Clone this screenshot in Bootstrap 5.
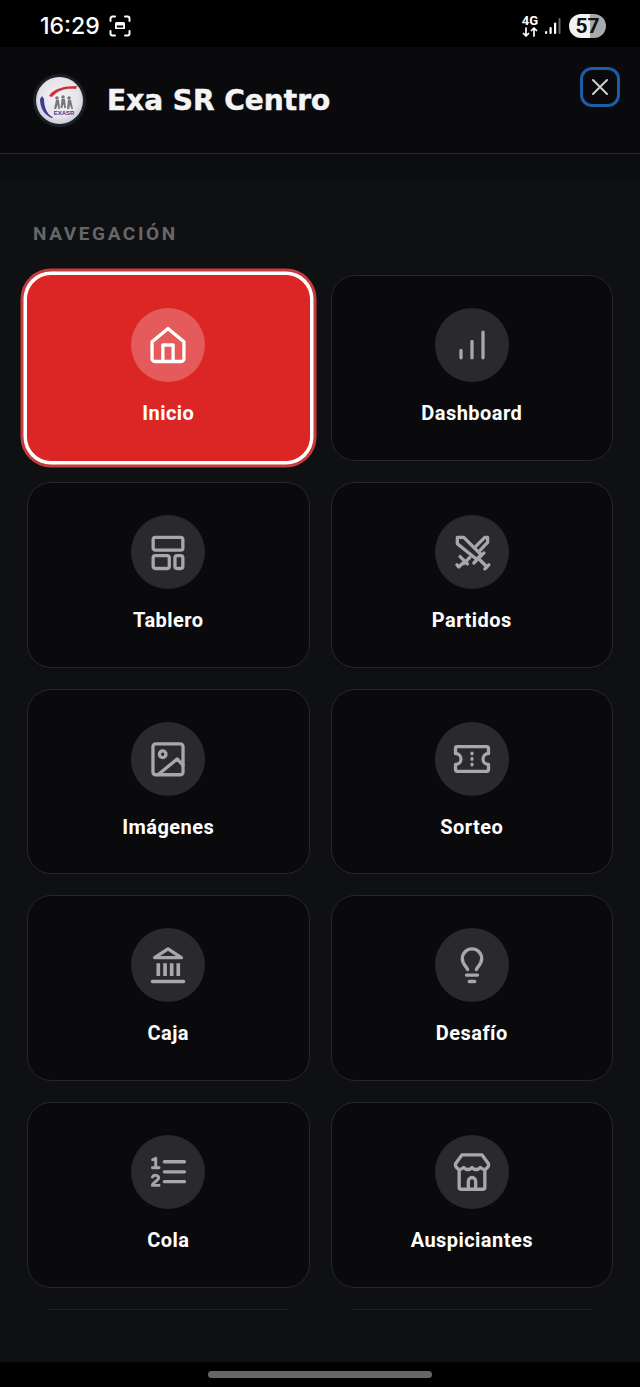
<!DOCTYPE html>
<html lang="es">
<head>
    <meta charset="UTF-8">
    <meta name="viewport" content="width=device-width, initial-scale=1.0">
    <title>Exa SR Centro</title>
    <link rel="stylesheet" href="https://cdn.jsdelivr.net/npm/bootstrap@5.3.0/dist/css/bootstrap.min.css">
    <style>
        html, body { height: 100%; background: #000; }
        body { font-family: Roboto, "Liberation Sans", sans-serif; overflow: hidden; }
        .phone { width: 640px; height: 1387px; background: #0f1012; }

        /* status bar */
        .status-top { height: 47px; background: #000; color: #fff; padding: 5px 34px 0 40px; }
        .clock { font-family: Inter, Roboto, sans-serif; font-size: 23px; font-weight: 500; line-height: 1; margin-right: 9px; }
        .net-type { font-size: 13px; font-weight: 700; line-height: 12px; margin-right: 7px; }
        .battery-pill { width: 37px; height: 24px; border-radius: 12px; color: #111; font-size: 21px; font-weight: 700; line-height: 24px;
            background: linear-gradient(90deg, #f2f2f2 0 57%, #a9a9a9 57% 100%); margin-left: 8px; }

        /* drawer header */
        .drawer-head { height: 107px; background: #0a0a0c; border-bottom: 1px solid #2b2b2d; padding: 20px 20px 0 33px; }
        .brand-logo { width: 53px; height: 53px; margin-top: 7px; margin-right: 21px; }
        .brand-name { font-family: "DejaVu Sans", sans-serif; font-size: 28px; font-weight: 700; color: #f4f4f5; -webkit-text-stroke: .5px #f4f4f5; line-height: 1; margin: 20px 0 0; }
        .close-box { width: 40px; height: 40px; background: transparent; border: 3.5px solid #1c5ca6; border-radius: 12px; padding: 0; }
        .head-strip { height: 27px; background: #0c0d0f; }

        /* navigation */
        .nav-area { height: 1181px; padding: 40px 27px 0 27px; overflow: hidden; }
        .section-label { font-size: 19px; font-weight: 700; letter-spacing: 2.6px; color: #66676b; line-height: 26px; margin: 0 0 28px 6px; }
        .tile-grid { display: grid; grid-template-columns: 1fr 1fr; gap: 21px; }
        .menu-tile { height: 185.75px; padding-top: 32px; background: #0a0a0c; border: 1px solid #26272a; border-radius: 24px; color: #fff; }
        .menu-tile.is-active { background: #dc2626; border-color: #dc2626; box-shadow: 0 0 0 3.5px #fff, 0 0 0 6.5px #c53a3a; }
        .tile-icon { width: 74px; height: 74px; background: #2a2a2c; color: #a8a8aa; margin-bottom: 18px; }
        .is-active .tile-icon { background: #e55b5b; color: #fff; }
        .tile-icon svg { width: 44px; height: 44px; fill: none; stroke: currentColor; stroke-width: 1.8; stroke-linecap: round; stroke-linejoin: round; }
        .tile-text { font-size: 20px; font-weight: 700; letter-spacing: .45px; line-height: 26px; }
        .peek-line { height: 1.5px; background: #1f2023; margin: 0 21px; }

        /* gesture bar */
        .gesture-zone { height: 25px; background: #000; }
        .gesture-handle { width: 224px; height: 7px; border-radius: 4px; background: #666; }
    </style>
</head>
<body>

<div class="phone d-flex flex-column">
    <!-- status bar -->
    <div class="status-top d-flex align-items-center flex-shrink-0">
        <span class="clock">16:29</span>
        <svg width="22" height="22" viewBox="0 0 22 22" fill="none" stroke="#fff" stroke-width="2" stroke-linecap="round">
            <path d="M1.5 6V3.500a2 2 0 0 1 2-2H6M16 1.500h2.500a2 2 0 0 1 2 2V6M20.500 16v2.500a2 2 0 0 1-2 2H16M6 20.500H3.500a2 2 0 0 1-2-2V16"/>
            <path d="M6 8.500a1.500 1.500 0 0 1 1.500-1.500h7A1.500 1.500 0 0 1 16 8.500V14H6z" fill="#fff" stroke="none"/>
            <rect x="7.800" y="10.500" width="6.400" height="2" fill="#000" stroke="none"/>
        </svg>
        <div class="ms-auto d-flex align-items-center">
            <div class="net-type d-flex flex-column align-items-center">
                <span>4G</span>
                <svg width="16" height="10" viewBox="0 0 16 10" fill="none" stroke="#fff" stroke-width="1.700" stroke-linecap="round" stroke-linejoin="round">
                    <path d="M4 1v8M1.500 6.500 4 9l2.500-2.500M12 9V1M9.500 3.500 12 1l2.500 2.500"/>
                </svg>
            </div>
            <svg width="16" height="18" viewBox="0 0 16 18" fill="#fff">
                <rect x="0" y="14" width="2.200" height="3" rx="1"/>
                <rect x="4.500" y="10" width="2.200" height="7" rx="1"/>
                <rect x="9" y="5.500" width="2.200" height="11.500" rx="1"/>
                <rect x="13.500" y="1" width="2" height="16" rx="1" fill="#666"/>
            </svg>
            <div class="battery-pill text-center">57</div>
        </div>
    </div>

    <!-- drawer header -->
    <div class="drawer-head d-flex align-items-start flex-shrink-0">
        <svg class="brand-logo flex-shrink-0" viewBox="0 0 53 53">
            <defs>
                <radialGradient id="logoFace" cx="50%" cy="45%" r="55%">
                    <stop offset="0" stop-color="#f4f4f6"/>
                    <stop offset=".75" stop-color="#e4e4e9"/>
                    <stop offset="1" stop-color="#c9cad3"/>
                </radialGradient>
            </defs>
            <circle cx="26.500" cy="26.500" r="26.500" fill="#1b2028"/>
            <circle cx="26.500" cy="26.500" r="23.500" fill="url(#logoFace)"/>
            <path d="M16 22c4-7 14-10 28-10l-1 3c-10-1-18 1-24 8z" fill="#d0303a"/>
            <path d="M7 25c0 9 4 16 12 19 1 .4 1-1 0-1.300C14 40 11 33 11 25l-2-3z" fill="#3d3a92"/>
            <g fill="#77777c">
                <circle cx="24" cy="24" r="1.800"/><circle cx="30" cy="23" r="1.800"/><circle cx="36" cy="24" r="1.800"/>
                <path d="M21 35l2-9h3l1 9h-1.500l-1-4-1.500 4zM27.500 34l1-9h3.500l1 9h-1.700l-1-4-1 4zM34 35l1-9h3l2 9h-1.500l-1.500-4-1 4z"/>
            </g>
            <text x="31" y="41" text-anchor="middle" font-family="Liberation Sans, sans-serif" font-size="6" font-weight="700" fill="#3d3a92">EXASR</text>
        </svg>
        <h1 class="brand-name flex-grow-1">Exa SR Centro</h1>
        <button class="close-box d-flex align-items-center justify-content-center" type="button" aria-label="Cerrar">
            <svg width="18" height="18" viewBox="0 0 18 18" stroke="#cfcfcf" stroke-width="2" stroke-linecap="round"><path d="M2 2l14 14M16 2L2 16"/></svg>
        </button>
    </div>
    <div class="head-strip flex-shrink-0"></div>

    <!-- navigation -->
    <div class="nav-area flex-shrink-0">
        <p class="section-label">NAVEGACIÓN</p>
        <div class="tile-grid">
            <a class="menu-tile is-active d-flex flex-column align-items-center text-decoration-none" href="#">
                <span class="tile-icon rounded-circle d-flex align-items-center justify-content-center">
                    <svg viewBox="0 0 24 24"><path d="M3.300 10.300 12 3l8.700 7.300v9.200a1.500 1.500 0 0 1-1.500 1.500H4.800a1.500 1.500 0 0 1-1.500-1.500z"/><path d="M9.200 20.800V12h5.600v8.800"/></svg>
                </span>
                <span class="tile-text">Inicio</span>
            </a>
            <a class="menu-tile d-flex flex-column align-items-center text-decoration-none" href="#">
                <span class="tile-icon rounded-circle d-flex align-items-center justify-content-center">
                    <svg viewBox="0 0 24 24"><path d="M6 19v-4M12 19v-9M18 19V5"/></svg>
                </span>
                <span class="tile-text">Dashboard</span>
            </a>
            <a class="menu-tile d-flex flex-column align-items-center text-decoration-none" href="#">
                <span class="tile-icon rounded-circle d-flex align-items-center justify-content-center">
                    <svg viewBox="0 0 24 24"><rect x="3.900" y="4" width="16.200" height="7" rx="1.200"/><rect x="3.900" y="14" width="8.800" height="7" rx="1.200"/><rect x="15.800" y="14" width="4.300" height="7" rx="1.200"/></svg>
                </span>
                <span class="tile-text">Tablero</span>
            </a>
            <a class="menu-tile d-flex flex-column align-items-center text-decoration-none" href="#">
                <span class="tile-icon rounded-circle d-flex align-items-center justify-content-center">
                    <svg viewBox="0 0 24 24"><path d="M4 4h3.500L17 13.500 14.500 16 4 7.500z"/><path d="M13 18l5.500-5.500M16.500 16.500l3.700 3.700M19 21.200l2.200-2.200"/><path d="M14.200 8.800 19 4h1.500v2.800l-4 4.200"/><path d="M10.800 15l-3.300 3.300M5.500 14.500l4 4M3.800 19l1 1.200 2-2"/></svg>
                </span>
                <span class="tile-text">Partidos</span>
            </a>
            <a class="menu-tile d-flex flex-column align-items-center text-decoration-none" href="#">
                <span class="tile-icon rounded-circle d-flex align-items-center justify-content-center">
                    <svg viewBox="0 0 24 24"><rect x="3.800" y="3.800" width="16.400" height="16.800" rx="1.500"/><circle cx="9.100" cy="9.400" r="1.800"/><path d="M6.700 20.500 17 12l3.200 3.300"/></svg>
                </span>
                <span class="tile-text">Imágenes</span>
            </a>
            <a class="menu-tile d-flex flex-column align-items-center text-decoration-none" href="#">
                <span class="tile-icon rounded-circle d-flex align-items-center justify-content-center">
                    <svg viewBox="0 0 24 24"><path d="M3.800 5.300h16.400a.8.8 0 0 1 .8.800V9a3 3 0 0 0 0 6v2.900a.8.8 0 0 1-.8.800H3.800a.8.8 0 0 1-.8-.8V15a3 3 0 0 0 0-6V6.100a.8.8 0 0 1 .8-.8z"/><path d="M12 8.800v.4M12 11.800v.4M12 14.800v.4"/></svg>
                </span>
                <span class="tile-text">Sorteo</span>
            </a>
            <a class="menu-tile d-flex flex-column align-items-center text-decoration-none" href="#">
                <span class="tile-icon rounded-circle d-flex align-items-center justify-content-center">
                    <svg viewBox="0 0 24 24"><path d="M12 3.200 4.700 8h14.600z"/><path d="M6.700 11v7M10.400 11v7M14 11v7M17.600 11v7" stroke-linecap="butt" stroke-width="2"/><path d="M3.500 21h17"/></svg>
                </span>
                <span class="tile-text">Caja</span>
            </a>
            <a class="menu-tile d-flex flex-column align-items-center text-decoration-none" href="#">
                <span class="tile-icon rounded-circle d-flex align-items-center justify-content-center">
                    <svg viewBox="0 0 24 24"><path d="M9.600 14.500C9.400 13 6.700 12 6.700 8.500a5.300 5.300 0 0 1 10.600 0c0 3.500-2.700 4.500-2.900 6"/><path d="M9 17.500h6M10.500 21h3"/></svg>
                </span>
                <span class="tile-text">Desafío</span>
            </a>
            <a class="menu-tile d-flex flex-column align-items-center text-decoration-none" href="#">
                <span class="tile-icon rounded-circle d-flex align-items-center justify-content-center">
                    <svg viewBox="0 0 24 24"><path d="M10 6.400h11M10 11.900h11M10 17.300h11"/><path d="M3.600 5.300 5.300 4.500v5M3.500 9.700h3.600M3.500 14.700c.5-1.300 3.400-1.200 3.400.5 0 1.500-3.400 2.600-3.400 4.100h3.600" stroke-width="1.600"/></svg>
                </span>
                <span class="tile-text">Cola</span>
            </a>
            <a class="menu-tile d-flex flex-column align-items-center text-decoration-none" href="#">
                <span class="tile-icon rounded-circle d-flex align-items-center justify-content-center">
                    <svg viewBox="0 0 24 24"><path d="M6.500 2.700h11L21 7.500v1.200c-1 2.300-3.200 2.300-4.500.8-1.200 1.500-3.300 1.500-4.500 0-1.200 1.500-3.300 1.500-4.500 0-1.300 1.500-3.500 1.500-4.500-.8V7.500z"/><path d="M5 11v9.500a.9.9 0 0 0 .9.900h12.200a.9.9 0 0 0 .9-.9V11"/><path d="M10 21.200V17a2 2 0 0 1 4 0v4.200"/></svg>
                </span>
                <span class="tile-text">Auspiciantes</span>
            </a>
            <div class="peek-line"></div>
            <div class="peek-line"></div>
        </div>
    </div>

    <!-- gesture bar -->
    <div class="gesture-zone d-flex justify-content-center align-items-center flex-shrink-0">
        <div class="gesture-handle"></div>
    </div>
</div>

<script src="https://cdn.jsdelivr.net/npm/bootstrap@5.3.0/dist/js/bootstrap.bundle.min.js"></script>
</body>
</html>
